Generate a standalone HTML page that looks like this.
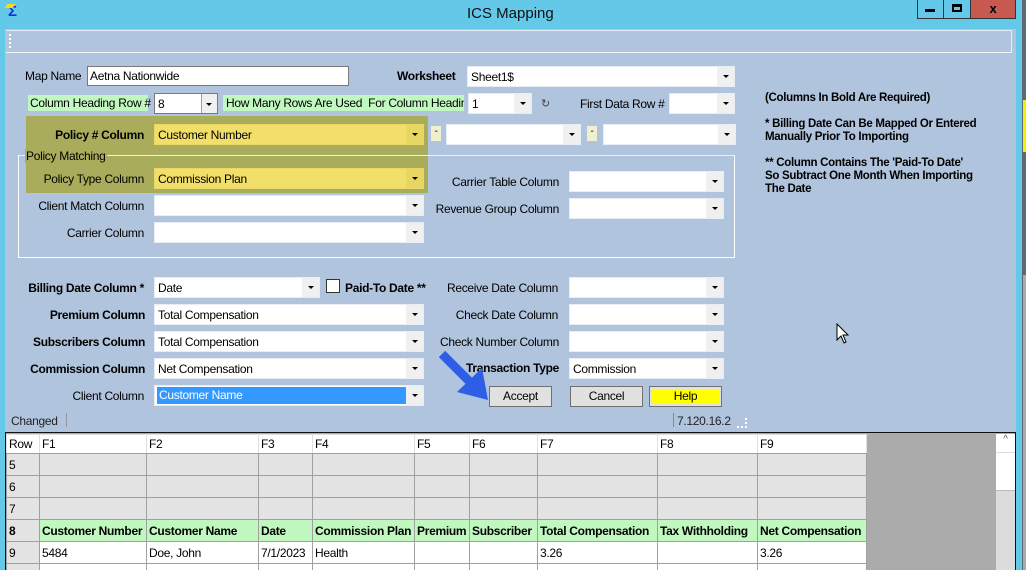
<!DOCTYPE html>
<html><head><meta charset="utf-8"><style>
*{box-sizing:border-box;margin:0;padding:0}
html,body{width:1026px;height:570px;overflow:hidden}
body{position:relative;background:#64c8e8;font-family:"Liberation Sans",Arial,sans-serif;font-size:12px;letter-spacing:-0.3px;color:#000}
.a{position:absolute;white-space:nowrap}
.cb{position:absolute;background:#fff;height:21px;border:1px solid #e6edf4}
.cb span{position:absolute;left:3px;top:3px;font-size:12px}
.cb i{position:absolute;right:0;top:0;width:17px;height:19px;background:#f0f0f0}
.cb i:after{content:"";position:absolute;left:6px;top:8px;border-left:3px solid transparent;border-right:3px solid transparent;border-top:3px solid #000}
.y{background:#f2df6a;border-color:#e9d766}
.y i{background:#e8d663}
.r{text-align:right}
.b{font-weight:bold}
.g{background:#c0f8c0}
.btn{position:absolute;height:21px;background:#e1e1e1;border:1px solid #707070;text-align:center;line-height:18px}
.n{font-weight:bold;font-size:11.5px}
table{border-collapse:collapse;position:absolute;left:6px;top:434px;font-size:12px;table-layout:fixed;width:860px}
td{border:1px solid #a0a0a0;height:22px;padding:0 2px;overflow:hidden;white-space:nowrap}
tr.h td{background:#fff;height:19px;border-color:#e0e0e0 #e0e0e0 #a0a0a0 #e0e0e0}
tr.e td{background:#e3e3e3}
tr.e td:first-child,tr.d td:first-child,tr.k td:first-child{background:#e3e3e3}
tr.k td{background:#c0f8c0;font-weight:bold}
tr.d td{background:#fff}
</style></head><body>
<div class="a" style="left:8px;top:3px;font-size:15px;font-weight:bold;color:#1030e0">Σ</div>
<div class="a" style="left:6px;top:4px;width:8px;height:4px;background:#f8d820;transform:skew(-30deg)"></div>
<div class="a" style="left:467px;top:5px;font-size:15px;color:#111;letter-spacing:0">ICS Mapping</div>
<div class="a" style="left:917px;top:0;width:27px;height:19px;border:1px solid #333;border-top:none;background:#64c8e8"></div>
<div class="a" style="left:925px;top:9px;width:10px;height:3px;background:#000"></div>
<div class="a" style="left:944px;top:0;width:27px;height:19px;border:1px solid #333;border-top:none;border-left:none;background:#64c8e8"></div>
<div class="a" style="left:952px;top:4px;width:10px;height:8px;border:2px solid #000;border-top-width:3px"></div>
<div class="a" style="left:971px;top:0;width:45px;height:19px;background:#c75a50;border:1px solid #333;border-top:none;border-left:none;text-align:center;font-weight:bold;font-size:13px;line-height:17px">x</div>
<div class="a" style="left:1022px;top:0;width:4px;height:570px;background:#5c6a72"></div>
<div class="a" style="left:1023px;top:100px;width:3px;height:52px;background:#f0f000"></div>
<div class="a" style="left:1023px;top:275px;width:3px;height:295px;background:#aaa"></div>
<div class="a" style="left:5px;top:29px;width:1011px;height:541px;background:#b0c4de"></div>
<div class="a" style="left:6px;top:30px;width:1006px;height:23px;border-top:1px solid #e8eef6;border-bottom:1px solid #f4f6fa;border-right:1px solid #e8eef6"></div>
<div class="a" style="left:9px;top:34px;width:2px;height:14px;border-left:2px dotted #fff"></div>

<div class="a" style="left:25px;top:69px">Map Name</div>
<div class="a" style="left:87px;top:66px;width:262px;height:20px;background:#fff;border:1px solid #7a7a7a;padding:2px 2px">Aetna Nationwide</div>
<div class="a b" style="left:397px;top:69px">Worksheet</div>
<div class="cb" style="left:467px;top:66px;width:268px"><span>Sheet1$</span><i></i></div>

<div class="a g" style="left:28px;top:95px;width:120px;height:16px;padding:1px 2px">Column Heading Row #</div>
<div class="a" style="left:154px;top:93px;width:64px;height:21px;background:#fff;border:1px solid #7a7a7a"><span style="position:absolute;left:3px;top:3px">8</span><i style="position:absolute;right:0;top:0;width:16px;height:19px;background:#f0f0f0;border-left:1px solid #a0a0a0"></i><span style="position:absolute;right:5px;top:9px;border-left:3px solid transparent;border-right:3px solid transparent;border-top:3px solid #000"></span></div>
<div class="a g" style="left:223px;top:95px;width:241px;height:16px;padding:1px 3px;overflow:hidden">How Many Rows Are Used&nbsp; For Column Headings</div>
<div class="cb" style="left:468px;top:93px;width:64px"><span>1</span><i></i></div>
<div class="a" style="left:541px;top:97px;font-size:11px;color:#444">↻</div>
<div class="a" style="left:580px;top:97px">First Data Row #</div>
<div class="cb" style="left:669px;top:93px;width:66px"><i></i></div>

<div class="a" style="left:26px;top:116px;width:402px;height:77px;background:#a9ad5b"></div>
<div class="a" style="left:18px;top:155px;width:717px;height:103px;border:1px solid #fff;border-top-color:#f0f0e8"></div>
<div class="a" style="left:25px;top:149px;background:#a9ad5b;padding:0 1px">Policy Matching</div>
<div class="a b r" style="left:26px;top:128px;width:118px">Policy # Column</div>
<div class="cb y" style="left:154px;top:124px;width:270px"><span>Customer Number</span><i></i></div>
<div class="a" style="left:431px;top:126px;width:10px;height:15px;background:#f0f0d0;text-align:center;font-size:10px">-</div>
<div class="cb" style="left:446px;top:124px;width:135px"><i></i></div>
<div class="a" style="left:587px;top:126px;width:10px;height:15px;background:#f0f0d0;text-align:center;font-size:10px">-</div>
<div class="cb" style="left:603px;top:124px;width:133px"><i></i></div>

<div class="a r" style="left:26px;top:172px;width:118px">Policy Type Column</div>
<div class="cb y" style="left:154px;top:168px;width:270px"><span>Commission Plan</span><i></i></div>
<div class="a r" style="left:26px;top:199px;width:118px">Client Match Column</div>
<div class="cb" style="left:154px;top:195px;width:270px"><i></i></div>
<div class="a r" style="left:26px;top:226px;width:118px">Carrier Column</div>
<div class="cb" style="left:154px;top:222px;width:270px"><i></i></div>
<div class="a r" style="left:420px;top:175px;width:139px">Carrier Table Column</div>
<div class="cb" style="left:569px;top:171px;width:155px"><i></i></div>
<div class="a r" style="left:420px;top:202px;width:139px">Revenue Group Column</div>
<div class="cb" style="left:569px;top:198px;width:155px"><i></i></div>

<div class="a b r" style="left:10px;top:281px;width:134px">Billing Date Column *</div>
<div class="cb" style="left:154px;top:277px;width:166px"><span>Date</span><i></i></div>
<div class="a" style="left:326px;top:279px;width:14px;height:14px;background:#fff;border:1px solid #333"></div>
<div class="a b" style="left:345px;top:281px">Paid-To Date **</div>
<div class="a b r" style="left:10px;top:308px;width:135px">Premium Column</div>
<div class="cb" style="left:154px;top:304px;width:270px"><span>Total Compensation</span><i></i></div>
<div class="a b r" style="left:10px;top:335px;width:135px">Subscribers Column</div>
<div class="cb" style="left:154px;top:331px;width:270px"><span>Total Compensation</span><i></i></div>
<div class="a b r" style="left:10px;top:362px;width:135px">Commission Column</div>
<div class="cb" style="left:154px;top:358px;width:270px"><span>Net Compensation</span><i></i></div>
<div class="a r" style="left:10px;top:389px;width:134px">Client Column</div>
<div class="cb" style="left:154px;top:385px;width:270px"><span style="left:2px;top:1px;width:249px;height:17px;background:#3399ff;color:#fff;padding:1px 2px">Customer Name</span><i></i></div>

<div class="a r" style="left:420px;top:281px;width:138px">Receive Date Column</div>
<div class="cb" style="left:569px;top:277px;width:155px"><i></i></div>
<div class="a r" style="left:420px;top:308px;width:138px">Check Date Column</div>
<div class="cb" style="left:569px;top:304px;width:155px"><i></i></div>
<div class="a r" style="left:420px;top:335px;width:139px">Check Number Column</div>
<div class="cb" style="left:569px;top:331px;width:155px"><i></i></div>
<div class="a b r" style="left:420px;top:361px;width:139px">Transaction Type</div>
<div class="cb" style="left:569px;top:358px;width:155px"><span>Commission</span><i></i></div>

<div class="btn" style="left:489px;top:386px;width:63px">Accept</div>
<div class="btn" style="left:570px;top:386px;width:73px">Cancel</div>
<div class="btn" style="left:649px;top:386px;width:73px;background:#e1e1e1;padding:2px"><div style="background:#ff0;height:15px;line-height:15px">Help</div></div>

<svg class="a" style="left:430px;top:340px" width="70" height="70"><path d="M12 14 L42 44" stroke="#2f5ee6" stroke-width="9"/><path d="M27 52 L58 60 L52 28 Z" fill="#2f5ee6"/></svg>

<div class="a" style="left:11px;top:414px;color:#222">Changed</div>
<div class="a" style="left:66px;top:413px;width:1px;height:14px;background:#999"></div>
<div class="a" style="left:673px;top:413px;width:1px;height:14px;background:#888"></div>
<div class="a" style="left:677px;top:414px;color:#222">7.120.16.2</div>
<div class="a" style="left:737px;top:418px;width:10px;height:10px;border-right:2px dotted #fff;border-bottom:2px dotted #fff"></div>

<div class="a n" style="left:765px;top:92px">(Columns In Bold Are Required)</div>
<div class="a n" style="left:765px;top:118px;line-height:13px">* Billing Date Can Be Mapped Or Entered<br>Manually Prior To Importing</div>
<div class="a n" style="left:765px;top:157px;line-height:13px">** Column Contains The 'Paid-To Date'<br>So Subtract One Month When Importing<br>The Date</div>

<svg class="a" style="left:836px;top:323px" width="14" height="22"><path d="M1 1 L1 17 L5 13 L8 20 L10 19 L7 12 L12 12 Z" fill="#fff" stroke="#000" stroke-width="1"/></svg>

<div class="a" style="left:5px;top:432px;width:1011px;height:138px;background:#ababab;border:1px solid #111;border-bottom:none"></div>
<table>
<colgroup><col style="width:33px"><col style="width:107px"><col style="width:112px"><col style="width:54px"><col style="width:102px"><col style="width:55px"><col style="width:68px"><col style="width:120px"><col style="width:100px"><col style="width:109px"></colgroup>
<tr class="h"><td>Row</td><td>F1</td><td>F2</td><td>F3</td><td>F4</td><td>F5</td><td>F6</td><td>F7</td><td>F8</td><td>F9</td></tr>
<tr class="e"><td>5</td><td></td><td></td><td></td><td></td><td></td><td></td><td></td><td></td><td></td></tr>
<tr class="e"><td>6</td><td></td><td></td><td></td><td></td><td></td><td></td><td></td><td></td><td></td></tr>
<tr class="e"><td>7</td><td></td><td></td><td></td><td></td><td></td><td></td><td></td><td></td><td></td></tr>
<tr class="k"><td>8</td><td>Customer Number</td><td>Customer Name</td><td>Date</td><td>Commission Plan</td><td>Premium</td><td>Subscriber</td><td>Total Compensation</td><td>Tax Withholding</td><td>Net Compensation</td></tr>
<tr class="d"><td>9</td><td>5484</td><td>Doe, John</td><td>7/1/2023</td><td>Health</td><td></td><td></td><td>3.26</td><td></td><td>3.26</td></tr>
<tr class="d"><td>10</td><td>5484</td><td>Doe, John</td><td>7/1/2023</td><td>Life</td><td></td><td></td><td>50.0</td><td></td><td>50.0</td></tr>
</table>
<div class="a" style="left:996px;top:434px;width:19px;height:136px;background:#dcdcdc"></div>
<div class="a" style="left:996px;top:434px;width:19px;height:18px;background:#fff;text-align:center;font-size:10px;color:#555">^</div>
<div class="a" style="left:996px;top:453px;width:19px;height:38px;background:#fff;border-bottom:1px solid #bbb"></div>
</body></html>
